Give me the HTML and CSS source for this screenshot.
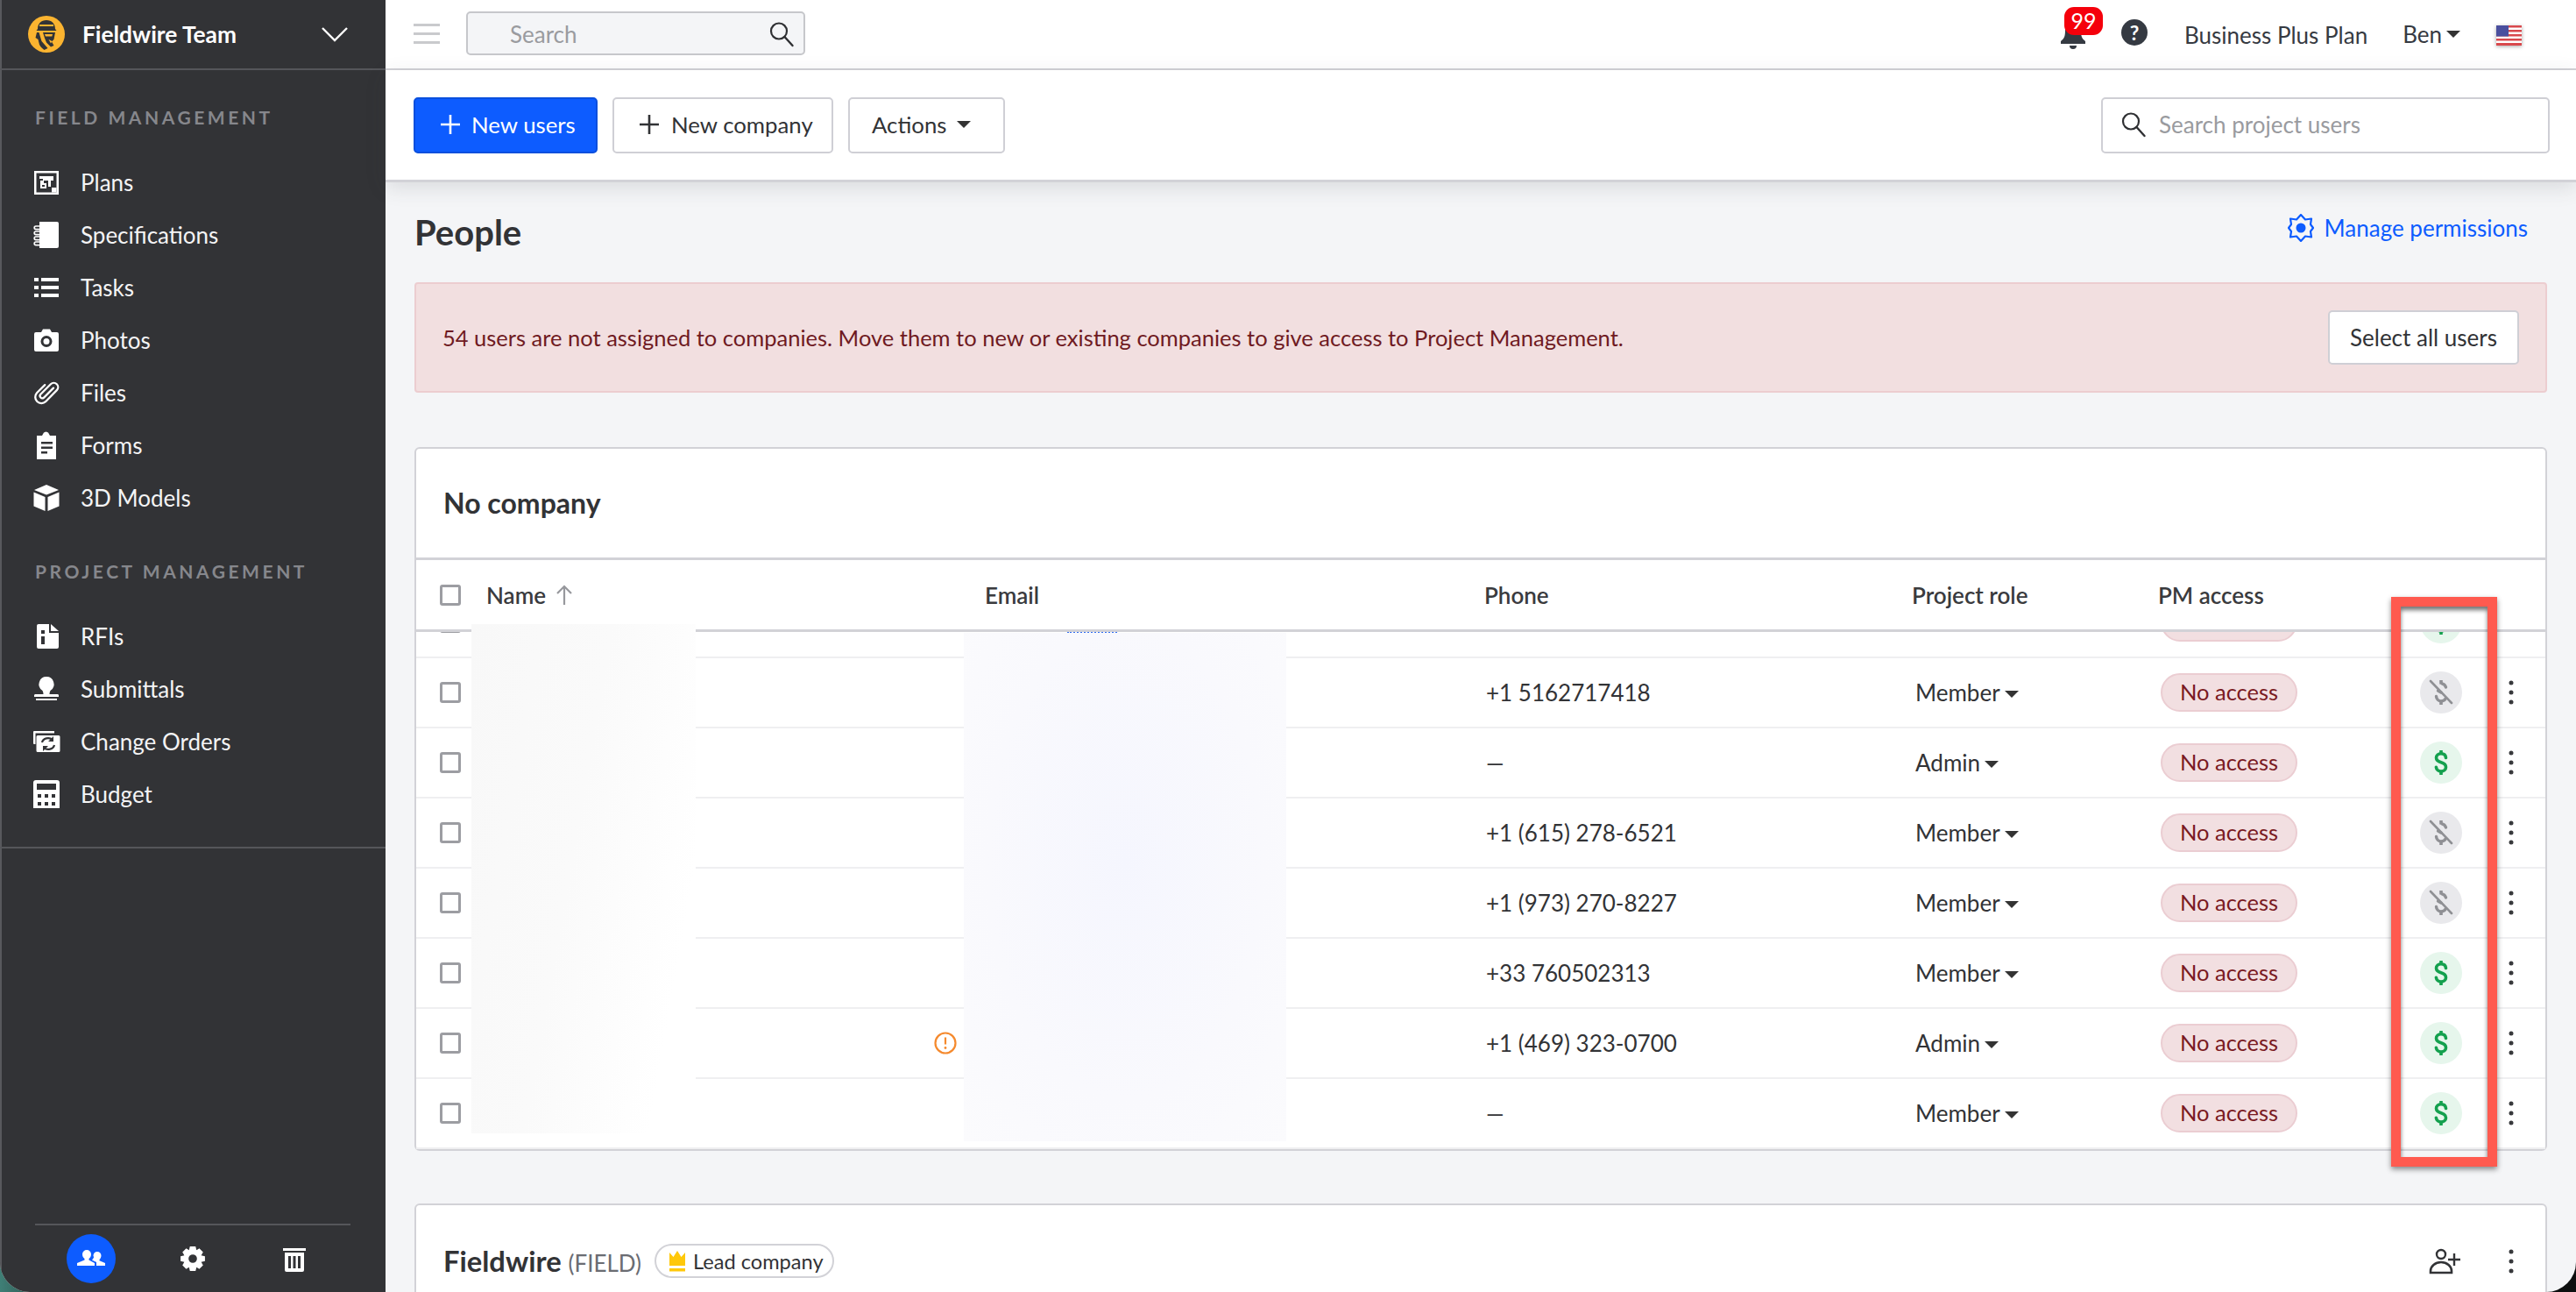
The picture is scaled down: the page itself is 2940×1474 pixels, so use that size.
FILE: index.html
```html
<!DOCTYPE html>
<html lang="en">
<head>
<meta charset="utf-8">
<title>People</title>
<link rel="stylesheet" href="styles.css">
</head>
<body>
<svg class="sprite" width="0" height="0" aria-hidden="true">
  <symbol id="i-dollar" viewBox="0 0 48 48">
    <path d="M29.500 18.500c-.3-2.800-2.500-4.700-5.500-4.700s-5.500 1.900-5.500 4.800c0 3.100 2.400 4.300 5.500 5.200s5.500 2.200 5.500 5.400c0 2.900-2.500 4.800-5.500 4.800s-5.300-1.900-5.600-4.800" fill="none" stroke="currentColor" stroke-width="3.600" stroke-linecap="round"/>
    <rect x="22.200" y="10" width="3.600" height="4.500" fill="currentColor"/>
    <rect x="22.200" y="33.500" width="3.600" height="4.500" fill="currentColor"/>
  </symbol>
  <symbol id="i-nodollar" viewBox="0 0 48 48">
    <path d="M29.500 18c-.6-2-2.400-3.700-4.500-4.200M18.500 28.500c.3 3 2.600 5.400 5.500 5.400 2.300 0 4.200-1 5-2.800M24 24l-3.500-2" fill="none" stroke="currentColor" stroke-width="3.400" stroke-linecap="round"/>
    <rect x="22.200" y="10" width="3.600" height="4.500" fill="currentColor"/>
    <rect x="22.200" y="33.500" width="3.600" height="4.500" fill="currentColor"/>
    <path d="M12 11l24 25" stroke="currentColor" stroke-width="2.600" stroke-linecap="round"/>
  </symbol>
  <symbol id="i-kebab" viewBox="0 0 10 30">
    <circle cx="5" cy="4" r="2.500" fill="currentColor"/><circle cx="5" cy="15" r="2.500" fill="currentColor"/><circle cx="5" cy="26" r="2.500" fill="currentColor"/>
  </symbol>
  <symbol id="i-search" viewBox="0 0 30 30">
    <circle cx="12" cy="11.500" r="9" fill="none" stroke="currentColor" stroke-width="2.200"/>
    <path d="M18.500 18l9 10" stroke="currentColor" stroke-width="2.400" stroke-linecap="round"/>
  </symbol>
  <symbol id="i-plus" viewBox="0 0 24 24">
    <path d="M12 1v22M1 12h22" stroke="currentColor" stroke-width="2.600" fill="none"/>
  </symbol>
</svg>

<div class="window">
  <aside class="sidebar">
    <header class="team">
      <svg class="team-logo" viewBox="0 0 42 42" aria-hidden="true">
        <circle cx="21" cy="21" r="21" fill="#fbb430"/>
        <path d="M11 15c0-6 4-10 10-10s10 4 10 10l1.500 2h-23z" fill="#323336"/>
        <path d="M13 10h16v2H13z" fill="#fbb430"/>
        <path d="M10 19h2.500l3 10 7 8-4 2c-2-2-4-3-5.500-6l-1.500-6-3-2zM17 19h14l-1.500 8-2.500 2.500 2.500 4.500-3.500 1.500-5-5-2-5z" fill="#323336"/>
        <path d="M19 21h9l-.7 2.500H20zM23.500 27l4 2-1.500 2.500z" fill="#fbb430"/>
      </svg>
      <span class="team-name">Fieldwire Team</span>
      <svg class="team-chevron" viewBox="0 0 30 18" aria-hidden="true"><path d="M1 2l14 14L29 2" fill="none" stroke="#fff" stroke-width="2.400"/></svg>
    </header>

    <h2 class="nav-label">FIELD MANAGEMENT</h2>
    <nav class="nav">
      <a class="nav-item"><svg class="nav-icon" viewBox="0 0 32 32"><path fill-rule="evenodd" d="M2 3h28v27H2zM4.500 5.500v22h23v-22z" fill="#fff"/><path d="M8 9h16v5h-3v7h-3v-7h-5v3h3v6H9v-9h3v-2H8zM11 19v2h3v-2z" fill="#fff"/><path d="M22 22h5.500v5.500H22z" fill="#fff"/></svg><span>Plans</span></a>
      <a class="nav-item"><svg class="nav-icon" viewBox="0 0 32 32"><path d="M8 1h20a2 2 0 0 1 2 2v26a2 2 0 0 1-2 2H8z" fill="#fff"/><path d="M10 6H4a1.800 1.800 0 0 0 0 3.600h6M10 12H4a1.800 1.800 0 0 0 0 3.600h6M10 18H4a1.800 1.800 0 0 0 0 3.600h6M10 24H4a1.800 1.800 0 0 0 0 3.600h6" fill="none" stroke="#fff" stroke-width="1.700"/></svg><span>Specifications</span></a>
      <a class="nav-item"><svg class="nav-icon" viewBox="0 0 32 32"><path d="M2 5h5v4H2zM10 5h20v4H10zM2 14h5v4H2zM10 14h20v4H10zM2 23h5v4H2zM10 23h20v4H10z" fill="#fff"/></svg><span>Tasks</span></a>
      <a class="nav-item"><svg class="nav-icon" viewBox="0 0 32 32"><path fill-rule="evenodd" d="M10 7l2-3.500h8L22 7h6a2 2 0 0 1 2 2v18a2 2 0 0 1-2 2H4a2 2 0 0 1-2-2V9a2 2 0 0 1 2-2zM16 11a6.500 6.500 0 1 0 0 13 6.500 6.500 0 0 0 0-13zM16 14a3.500 3.500 0 1 1 0 7 3.500 3.500 0 0 1 0-7z" fill="#fff"/></svg><span>Photos</span></a>
      <a class="nav-item"><svg class="nav-icon" viewBox="-2 -2 36 36"><path d="M25 10L12.500 22.500a3 3 0 0 1-4.200-4.200L21.500 5a5.500 5.500 0 0 1 7.800 7.800L15 27.500a8 8 0 0 1-11.300-11.300L14 6" fill="none" stroke="#fff" stroke-width="2.600" stroke-linecap="round"/></svg><span>Files</span></a>
      <a class="nav-item"><svg class="nav-icon" viewBox="0 0 32 32"><path fill-rule="evenodd" d="M5 5h6l2-3.500 2.500-1 2.500 1L20 5h7v27H5zM10 12v2.500h13V12zM10 17.500V20h13v-2.500zM10 23v2.500h7V23z" fill="#fff"/></svg><span>Forms</span></a>
      <a class="nav-item"><svg class="nav-icon" viewBox="0 0 32 32"><path d="M16 1l14 6-14 5.500L2 7zM1.500 9.500l13 5.500v16l-13-5.500zM30.500 9.500l-13 5.500v16l13-5.500z" fill="#fff"/></svg><span>3D Models</span></a>
    </nav>

    <h2 class="nav-label nav-label-pm">PROJECT MANAGEMENT</h2>
    <nav class="nav nav-pm">
      <a class="nav-item"><svg class="nav-icon" viewBox="0 0 32 32"><path fill-rule="evenodd" d="M7 2h12v10h11v16a2 2 0 0 1-2 2H7a2 2 0 0 1-2-2V4a2 2 0 0 1 2-2zM10 9v4h4V9zM10 16v9h4v-9zM21 2l9 8h-9z" fill="#fff"/></svg><span>RFIs</span></a>
      <a class="nav-item"><svg class="nav-icon" viewBox="0 0 32 32"><path d="M16 2a8.500 8.500 0 0 1 5 15.400c-1 1-1.500 2.600-1.500 4.600h9c1 0 1.500.600 1.500 1.500V25H2v-1.500c0-.900.500-1.500 1.500-1.500h9c0-2-.500-3.600-1.500-4.600A8.500 8.500 0 0 1 16 2zM4 27h24v2H4z" fill="#fff"/></svg><span>Submittals</span></a>
      <a class="nav-item"><svg class="nav-icon" viewBox="0 0 32 32"><path d="M1 5a1 1 0 0 1 1-1h23v2.500H3.500V19H2a1 1 0 0 1-1-1z" fill="#fff"/><path fill-rule="evenodd" d="M6 9h24a1.500 1.500 0 0 1 1.500 1.500v16a1.500 1.500 0 0 1-1.500 1.500H6a1.500 1.500 0 0 1-1.500-1.500v-16A1.500 1.500 0 0 1 6 9z" fill="#fff"/><path d="M11 17a7 6 0 0 1 12-3M25 20a7 6 0 0 1-12 3" fill="none" stroke="#323336" stroke-width="2.200"/><path d="M24 10v6h-6zM12 27v-6h6z" fill="#323336"/></svg><span>Change Orders</span></a>
      <a class="nav-item"><svg class="nav-icon" viewBox="0 0 32 32"><path fill-rule="evenodd" d="M4 0h24a3 3 0 0 1 3 3v28a3 3 0 0 1-3 3H4a3 3 0 0 1-3-3V3a3 3 0 0 1 3-3zM5 4v7h22V4zM6 16v4h4v-4zM14 16v4h4v-4zM22 16v4h4v-4zM6 25v4h4v-4zM14 25v4h4v-4zM22 25v4h4v-4z" fill="#fff"/></svg><span>Budget</span></a>
    </nav>

    <footer class="side-foot">
      <div class="side-tools">
        <span class="tool tool-active"><svg viewBox="0 0 32 24"><path d="M11 2a5 5 0 0 1 5 5c0 2-1 4-2.500 5v1.500L20 17v3H0v-3l8.500-3.500V12C7 11 6 9 6 7a5 5 0 0 1 5-5zM23 4a4.500 4.500 0 0 1 4.500 4.500c0 1.800-1 3.500-2 4.500v1.200L32 17v3H22v-4l-5-2.500c1-1 1.500-2 2-3 .2-.8-.500-1.500-.500-2A4.500 4.500 0 0 1 23 4z" fill="#fff"/></svg></span>
        <span class="tool"><svg viewBox="0 0 28 28"><path fill-rule="evenodd" d="M11 1h6l1 4 3-2 4 4-2 3.500 4 1v5l-4 1 2 3.500-4 4-3-2-1 4h-6l-1-4-3 2-4-4 2-3.500-4-1v-5l4-1L3 7l4-4 3 2zM14 9.500a4.500 4.500 0 1 0 0 9 4.500 4.500 0 0 0 0-9z" fill="#fff"/></svg></span>
        <span class="tool"><svg viewBox="0 0 28 30"><path fill-rule="evenodd" d="M1 3h26v3H1zM3 8h22v20a2 2 0 0 1-2 2H5a2 2 0 0 1-2-2zM7 12v14h3V12zM12.500 12v14h3V12zM18 12v14h3V12z" fill="#fff"/></svg></span>
      </div>
    </footer>
  </aside>

  <main class="main">
    <div class="topbar">
      <span class="burger"><i></i><i></i><i></i></span>
      <div class="top-search">
        <span>Search</span>
        <svg class="ico-search"><use href="#i-search"/></svg>
      </div>
      <div class="top-right">
        <span class="bell">
          <svg viewBox="0 0 30 34"><path d="M15 2c6 0 9 5 9 11 0 6 1 9 5 12v3H1v-3c4-3 5-6 5-12 0-6 3-11 9-11z" fill="#353a42"/><path d="M11 30h8a4 4 0 0 1-8 0z" fill="#353a42"/></svg>
          <b class="bell-count">99</b>
        </span>
        <span class="help">?</span>
        <span class="plan">Business Plus Plan</span>
        <span class="user">Ben<i class="caret"></i></span>
        <svg class="flag" viewBox="0 0 29 23" aria-hidden="true">
          <rect width="29" height="23" fill="#fff"/>
          <path d="M0 0h29v2.500H0zM0 5h29v2.500H0zM0 10h29v2.500H0zM0 15h29v2.500H0zM0 20h29v3H0z" fill="#d9484c"/>
          <rect width="14" height="12.500" fill="#4a4f9e"/>
        </svg>
      </div>
    </div>

    <div class="toolbar">
      <button class="btn btn-primary"><svg class="ico-plus"><use href="#i-plus"/></svg>New users</button>
      <button class="btn btn-company"><svg class="ico-plus"><use href="#i-plus"/></svg>New company</button>
      <button class="btn btn-actions">Actions<i class="caret caret-btn"></i></button>
      <div class="user-search">
        <svg class="ico-search"><use href="#i-search"/></svg>
        <span>Search project users</span>
      </div>
    </div>

    <div class="content">
      <div class="page-head">
        <h1>People</h1>
        <a class="manage">
          <svg viewBox="0 0 30 32" aria-hidden="true"><path d="M15 1L20 6.500 27 5.500 26 12 29 16 26 20 27 26.500 20 25.500 15 31 10 25.500 3 26.500 4 20 1 16 4 12 3 5.500 10 6.500z" fill="none" stroke="#0d5cff" stroke-width="2.200" stroke-linejoin="round"/><circle cx="15" cy="16" r="5.500" fill="#0d5cff"/></svg>
          Manage permissions
        </a>
      </div>

      <div class="alert">
        <span>54 users are not assigned to companies. Move them to new or existing companies to give access to Project Management.</span>
        <button class="btn btn-select">Select all users</button>
      </div>

      <section class="card">
        <h2 class="card-title card-title-first">No company</h2>
        <div class="t-row t-head">
          <span class="check"></span>
          <span class="sort">Name <svg viewBox="0 0 20 24" aria-hidden="true"><path d="M10 23V2M2 10l8-8 8 8" fill="none" stroke="#97989d" stroke-width="2.200"/></svg></span>
          <span>Email</span>
          <span>Phone</span>
          <span>Project role</span>
          <span>PM access</span>
        </div>
        <div class="t-body">
          <div class="t-row t-clip">
            <span class="check"></span><span></span><span class="email-cut"></span><span></span><span></span>
            <span class="pill"></span>
            <span class="paid"><svg><use href="#i-dollar"/></svg></span>
            <span></span>
          </div>
          <div class="t-row">
            <span class="check"></span><span></span><span></span>
            <span class="phone">+1 5162717418</span>
            <span class="role">Member<i class="caret"></i></span>
            <span class="pill">No access</span>
            <span class="unpaid"><svg><use href="#i-nodollar"/></svg></span>
            <svg class="kebab"><use href="#i-kebab"/></svg>
          </div>
          <div class="t-row">
            <span class="check"></span><span></span><span></span>
            <span class="phone">—</span>
            <span class="role">Admin<i class="caret"></i></span>
            <span class="pill">No access</span>
            <span class="paid"><svg><use href="#i-dollar"/></svg></span>
            <svg class="kebab"><use href="#i-kebab"/></svg>
          </div>
          <div class="t-row">
            <span class="check"></span><span></span><span></span>
            <span class="phone">+1 (615) 278-6521</span>
            <span class="role">Member<i class="caret"></i></span>
            <span class="pill">No access</span>
            <span class="unpaid"><svg><use href="#i-nodollar"/></svg></span>
            <svg class="kebab"><use href="#i-kebab"/></svg>
          </div>
          <div class="t-row">
            <span class="check"></span><span></span><span></span>
            <span class="phone">+1 (973) 270-8227</span>
            <span class="role">Member<i class="caret"></i></span>
            <span class="pill">No access</span>
            <span class="unpaid"><svg><use href="#i-nodollar"/></svg></span>
            <svg class="kebab"><use href="#i-kebab"/></svg>
          </div>
          <div class="t-row">
            <span class="check"></span><span></span><span></span>
            <span class="phone">+33 760502313</span>
            <span class="role">Member<i class="caret"></i></span>
            <span class="pill">No access</span>
            <span class="paid"><svg><use href="#i-dollar"/></svg></span>
            <svg class="kebab"><use href="#i-kebab"/></svg>
          </div>
          <div class="t-row">
            <span class="check"></span>
            <span class="warn-cell"><svg class="warn" viewBox="0 0 26 26" aria-hidden="true"><circle cx="13" cy="13" r="11.500" fill="none" stroke="#f58a2e" stroke-width="2.200"/><path d="M13 6.500v8" stroke="#f58a2e" stroke-width="2.200"/><circle cx="13" cy="18.500" r="1.400" fill="#f58a2e"/></svg></span>
            <span></span>
            <span class="phone">+1 (469) 323-0700</span>
            <span class="role">Admin<i class="caret"></i></span>
            <span class="pill">No access</span>
            <span class="paid"><svg><use href="#i-dollar"/></svg></span>
            <svg class="kebab"><use href="#i-kebab"/></svg>
          </div>
          <div class="t-row">
            <span class="check"></span><span></span><span></span>
            <span class="phone">—</span>
            <span class="role">Member<i class="caret"></i></span>
            <span class="pill">No access</span>
            <span class="paid"><svg><use href="#i-dollar"/></svg></span>
            <svg class="kebab"><use href="#i-kebab"/></svg>
          </div>
        </div>
      </section>

      <section class="card card-next">
        <div class="company-head">
          <h2 class="card-title card-title-company">Fieldwire <small>(FIELD)</small></h2>
          <span class="lead">
            <svg viewBox="0 0 20 24" aria-hidden="true"><path d="M1 2l4.500 5L10 0l4.500 7L19 2v15H1z" fill="#ffc80a"/><rect x="1" y="20" width="18" height="3.500" fill="#ffc80a"/></svg>
            Lead company
          </span>
          <svg class="add-user" viewBox="0 0 38 30" aria-hidden="true"><circle cx="14" cy="7" r="5" fill="none" stroke="#323336" stroke-width="2.400"/><path d="M2 28v-2a12 10 0 0 1 24 0v2zM2 28h24" fill="none" stroke="#323336" stroke-width="2.600"/><path d="M29 6v14M22 13h14" stroke="#323336" stroke-width="2.400"/></svg>
          <svg class="kebab"><use href="#i-kebab"/></svg>
        </div>
      </section>
    </div>
  </main>

  <div class="redact redact-name"></div>
  <div class="redact redact-email"></div>
  <div class="annotation"></div>
</div>
</body>
</html>
```

FILE: styles.css
```css
* { box-sizing: border-box; }
html, body { height: 100%; margin: 0; }
body {
  overflow: hidden;
  background: linear-gradient(90deg, #3f7f76 0, #1d2a28 3%, #0d0f0f 100%);
  font-family: "Lato", "Liberation Sans", sans-serif;
  font-size: 26px;
  color: #323336;
}
h1, h2 { margin: 0; font: inherit; }
button { font: inherit; color: inherit; }
.sprite { position: absolute; }

.window {
  position: relative;
  display: flex;
  height: 100vh;
  overflow: hidden;
  border-radius: 0 0 34px 34px;
  background: #f4f5f7;
}

/* Sidebar */
.sidebar {
  display: flex;
  flex-direction: column;
  flex: 0 0 440px;
  border-left: 2px solid #58595d;
  background: #323336;
  color: #fff;
}
.team {
  display: flex;
  align-items: center;
  height: 80px;
  margin-left: -2px;
  padding: 0 43px 0 32px;
  border-bottom: 2px solid #55565a;
}
.team-logo { flex: none; width: 42px; height: 42px; }
.team-name { margin-left: 20px; font-size: 26.300px; font-weight: 700; }
.team-chevron { width: 30px; height: 18px; margin-left: auto; }
.nav-label {
  margin: 41px 0 0 38px;
  font-size: 21px;
  line-height: 26px;
  font-weight: 700;
  letter-spacing: 3.550px;
  color: #86878c;
}
.nav-label-pm { margin-top: 41px; }
.nav { display: flex; flex-direction: column; margin-top: 31px; }
.nav-pm { margin-top: 31px; padding-bottom: 30px; border-bottom: 2px solid #55565a; margin-left: -2px; }
.nav-pm .nav-item { padding-left: 37px; }
.nav-item {
  display: flex;
  align-items: center;
  gap: 23px;
  height: 60px;
  padding-left: 35px;
  color: #f4f4f5;
}
.nav-icon { flex: none; width: 32px; height: 32px; }
.side-foot { margin-top: auto; padding: 0 38px 10px; }
.side-tools {
  display: grid;
  grid-template-columns: repeat(3, 116px);
  justify-content: center;
  width: 360px;
  padding-top: 10px;
  border-top: 2px solid #55565a;
}
.tool {
  display: flex;
  align-items: center;
  justify-content: center;
  justify-self: center;
  width: 56px;
  height: 56px;
  border-radius: 50%;
}
.tool svg { width: 30px; height: 30px; }
.tool-active { background: #0d5cff; }
.tool-active svg { width: 32px; height: 24px; }

/* Main column */
.main { flex: 1; display: flex; flex-direction: column; min-width: 0; }
.topbar {
  display: flex;
  align-items: center;
  flex: 0 0 80px;
  padding: 0 32px 2px;
  background: #fff;
  border-bottom: 2px solid #d2d2d7;
}
.burger { display: flex; flex-direction: column; gap: 7px; width: 30px; }
.burger i { height: 3px; background: #c9cacd; }
.top-search {
  display: flex;
  align-items: center;
  justify-content: space-between;
  width: 387px;
  height: 50px;
  margin-left: 30px;
  padding: 2px 10px 0 48px;
  border: 2px solid #c6c7cb;
  border-radius: 5px;
  background: #f4f5f7;
  color: #9a9b9f;
}
.ico-search { width: 30px; height: 30px; color: #2f3033; }
.top-right { display: flex; align-items: center; margin-left: auto; }
.bell { position: relative; display: block; width: 30px; height: 34px; margin: 2px 40px 0 0; }
.bell svg { display: block; width: 30px; height: 34px; }
.bell-count {
  position: absolute;
  top: -14px;
  left: 5px;
  width: 44px;
  height: 32px;
  border-radius: 11px;
  background: #f5000b;
  color: #fff;
  font-size: 25px;
  font-weight: 400;
  line-height: 31px;
  text-align: center;
}
.help {
  width: 30px;
  height: 30px;
  margin-top: -2px;
  border-radius: 50%;
  background: #353a42;
  color: #fff;
  font-size: 23px;
  font-weight: 700;
  line-height: 30px;
  text-align: center;
}
.plan { margin: 4px 0 0 42px; color: #363a42; }
.user { display: flex; align-items: center; margin: 1px 0 0 40px; color: #363a42; }
.flag { width: 29px; height: 23px; margin: 4px 30px 0 41px; filter: drop-shadow(0 1px 2px rgba(0,0,0,.35)); }
.caret {
  display: inline-block;
  width: 0;
  height: 0;
  margin-left: 5px;
  border-left: 8px solid transparent;
  border-right: 8px solid transparent;
  border-top: 8px solid #333;
}

.toolbar {
  position: relative;
  display: flex;
  align-items: center;
  flex: 0 0 128px;
  gap: 17px;
  padding: 0 30px 0 32px;
  background: #fff;
  border-bottom: 3px solid #d2d2d7;
  box-shadow: 0 6px 22px rgba(60, 62, 70, .14);
}
.btn {
  display: inline-flex;
  align-items: center;
  height: 64px;
  padding: 0 24px;
  border: 2px solid #cfcfd5;
  border-radius: 5px;
  background: #fff;
  color: #323336;
}
.btn-primary { padding: 0 0 2px 28px; width: 210px; border-color: #0a4fdd; background: #0d5cff; color: #fff; font-size: 25.800px; }
.btn-company { padding: 0 0 2px 28px; width: 252px; font-size: 25.800px; }
.btn-actions { padding: 0 0 2px 25px; width: 179px; font-size: 25.800px; }
.ico-plus { width: 24px; height: 24px; margin-right: 12px; }
.btn-company .ico-plus { margin-right: 13px; }
.caret-btn { margin-left: 11px; }
.user-search {
  display: flex;
  align-items: center;
  gap: 14px;
  width: 512px;
  height: 64px;
  margin-left: auto;
  padding: 0 0 2px 20px;
  border: 2px solid #cfcfd5;
  border-radius: 5px;
  color: #9a9b9f;
}

/* Content */
.content { flex: 1; min-height: 0; padding: 0 33px; }
.page-head { display: flex; align-items: center; justify-content: space-between; height: 114px; }
.page-head h1 { font-size: 40px; font-weight: 700; }
.manage {
  display: flex;
  align-items: center;
  gap: 12px;
  margin: 0 22px 11px 0;
  color: #0d5cff;
}
.manage svg { width: 30px; height: 32px; }
.alert {
  display: flex;
  align-items: center;
  justify-content: space-between;
  height: 126px;
  margin-bottom: 62px;
  padding: 0 30px;
  border: 2px solid #eccdd0;
  border-radius: 4px;
  background: #f2dfe0;
  color: #6f1a22;
  font-size: 25.500px;
}
.btn-select { height: 62px; width: 218px; justify-content: center; padding: 0; font-size: 26px; }

.card {
  border: 2px solid #d2d2d7;
  border-radius: 6px;
  background: #fff;
}
.card-title { font-size: 32px; font-weight: 700; }
.card-title-company { font-size: 32.700px; }
.card-title small { font-size: 26px; font-weight: 400; color: #6a6c72; }
.card-title-first {
  display: flex;
  align-items: center;
  height: 127px;
  padding: 0 0 1px 31px;
  border-bottom: 3px solid #d2d2d7;
}
.t-row {
  display: grid;
  grid-template-columns: 80px 569px 570px 488px 281px 290px 66px 1fr;
  align-items: center;
  height: 80px;
  border-bottom: 2px solid #efeff1;
}
.t-row > .check { margin-left: 27px; }
.check {
  display: block;
  width: 24px;
  height: 24px;
  border: 3px solid #9c9da2;
  border-radius: 3px;
  background: #fff;
}
.t-head {
  height: 82px;
  border-bottom: 3px solid #d2d2d7;
  font-weight: 600;
  color: #3a3b3e;
}
.sort { display: flex; align-items: center; gap: 11px; }
.sort svg { width: 20px; height: 24px; }
.t-body { height: 590px; overflow: hidden; }
.t-clip { margin-top: -50px; }
.email-cut {
  align-self: end;
  width: 57px;
  margin: 0 0 27px 94px;
  border-bottom: 2px dotted #2f6bf0;
}
.phone { padding-left: 2px; }
.role { display: flex; align-items: center; padding-left: 4px; }
.role .caret { margin-top: 4px; }
.pill {
  justify-self: start;
  width: 156px;
  height: 44px;
  margin-left: 3px;
  border: 2px solid #ebcdd2;
  border-radius: 22px;
  background: #f2dfe1;
  color: #7a1a22;
  font-size: 25.500px;
  line-height: 39px;
  text-align: center;
}
.paid, .unpaid {
  display: block;
  width: 48px;
  height: 48px;
  margin-left: 9px;
  border-radius: 50%;
}
.paid svg, .unpaid svg { display: block; width: 48px; height: 48px; }
.paid { background: #e6f6ec; color: #14a04e; }
.unpaid { background: #e9e9ec; color: #8f9094; }
.kebab { width: 10px; height: 30px; margin-left: 42px; color: #38393c; }
.warn-cell { display: flex; justify-content: flex-end; padding-right: 32px; }
.warn { width: 26px; height: 26px; }

.card-next { margin-top: 60px; height: 200px; }
.company-head { display: flex; align-items: center; height: 127px; padding: 0 0 0 31px; }
.lead {
  display: flex;
  align-items: center;
  gap: 8px;
  height: 39px;
  margin-left: 15px;
  padding: 0 10px 0 14px;
  border: 2px solid #d2d2d7;
  border-radius: 20px;
  font-size: 23.600px;
}
.lead svg { width: 20px; height: 24px; }
.add-user { width: 38px; height: 30px; margin-left: auto; }
.company-head .kebab { margin: 0 34px 0 51px; }

/* Overlays: privacy blur and the red annotation frame */
.redact { position: absolute; }
.redact-name {
  left: 538px;
  top: 712px;
  width: 256px;
  height: 581px;
  background: linear-gradient(100deg, #f8f8f8 0, #fafafa 45%, #fff 85%);
}
.redact-email {
  left: 1100px;
  top: 722px;
  width: 368px;
  height: 580px;
  background: radial-gradient(ellipse at 50% 45%, #f5f6fe 0, #f9f9fd 60%, #fbfbfd 100%);
}
.annotation {
  position: absolute;
  left: 2729px;
  top: 681px;
  width: 121px;
  height: 650px;
  border: 11px solid #ff5a4f;
  box-shadow: 0 3px 6px rgba(0,0,0,.45), inset 0 4px 5px rgba(0,0,0,.55);
}
```
